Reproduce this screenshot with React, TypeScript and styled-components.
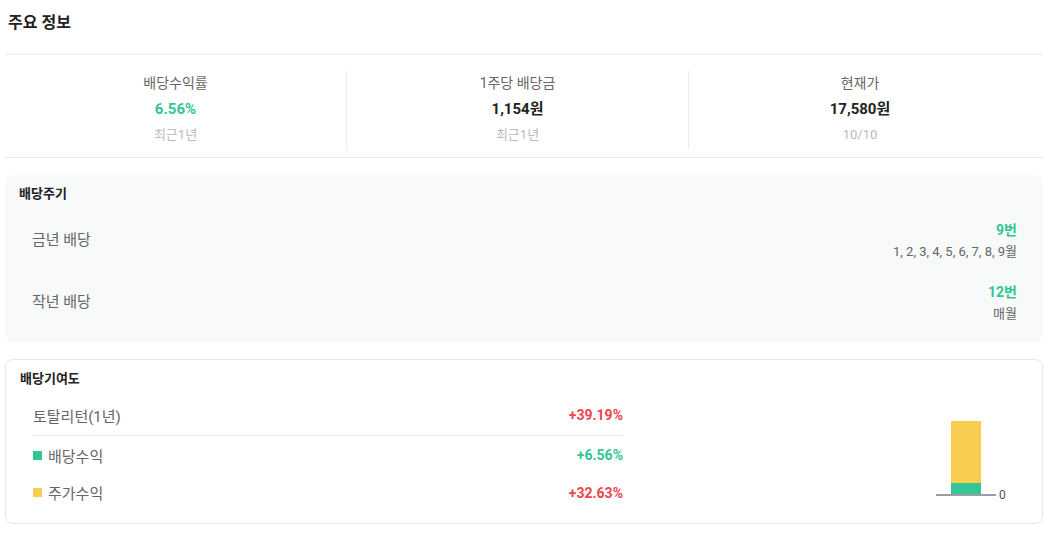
import { createGlobalStyle } from "styled-components";
import styled from "styled-components";

const GREEN = "#33c596";
const RED = "#f2434f";
const YELLOW = "#f8cd50";

const GlobalStyle = createGlobalStyle`
  body {
    margin: 0;
    background: #fff;
    font-family: Roboto, "Noto Sans CJK KR", sans-serif;
    color: #222;
  }
`;

const Page = styled.div`
  width: 1038px;
  padding: 0 21px 10px 5px;
`;

const PageTitle = styled.h2`
  margin: 0;
  height: 55px;
  line-height: 46px;
  padding-left: 3px;
  font-size: 16px;
  font-weight: 700;
  color: #222;
  border-bottom: 1px solid #ebebeb;
  box-sizing: border-box;
`;

const Stats = styled.div`
  display: grid;
  grid-template-columns: repeat(3, 342px);
  padding: 16px 0 8px;
  border-bottom: 1px solid #ebebeb;
  margin-bottom: 17px;
`;

const Stat = styled.div<{ $last?: boolean }>`
  display: flex;
  flex-direction: column;
  align-items: center;
  height: 78px;
  border-right: ${(p) => (p.$last ? "none" : "1px solid #ebebeb")};
`;

const StatLabel = styled.div`
  font-size: 14px;
  line-height: 24px;
  color: #666;
`;

const StatValue = styled.div<{ $green?: boolean }>`
  font-size: 15px;
  font-weight: 700;
  line-height: 28px;
  color: ${(p) => (p.$green ? GREEN : "#222")};
`;

const StatSub = styled.div`
  font-size: 13px;
  line-height: 24px;
  color: #bbb;
`;

const CycleBox = styled.section`
  background: #f8f9f9;
  border-radius: 8px;
  padding: 10px 14px 8px;
  margin-bottom: 17px;
`;

const BoxTitle = styled.h3`
  margin: 0 0 7px;
  font-size: 13px;
  font-weight: 700;
  line-height: 18px;
  color: #222;
`;

const CycleRow = styled.div`
  display: flex;
  justify-content: space-between;
  align-items: center;
  padding: 10px 12px 10px 13px;
`;

const RowLabel = styled.div`
  font-size: 15px;
  line-height: 20px;
  color: #666;
  margin-bottom: 3px;
`;

const CycleRight = styled.div`
  display: flex;
  flex-direction: column;
  align-items: flex-end;
`;

const CountText = styled.div`
  font-size: 14px;
  font-weight: 700;
  line-height: 21px;
  color: ${GREEN};
`;

const MonthText = styled.div`
  font-size: 13px;
  line-height: 21px;
  color: #666;
`;

const ContribCard = styled.section`
  border: 1px solid #e8e8e8;
  border-radius: 8px;
  padding: 10px 14px 12px;
`;

const ContribBody = styled.div`
  display: flex;
  align-items: flex-end;
  justify-content: space-between;
  margin-top: 7px;
`;

const ContribList = styled.div`
  width: 590px;
  margin-left: 13px;
`;

const ContribRow = styled.div<{ $h: number; $divider?: boolean }>`
  display: flex;
  justify-content: space-between;
  align-items: center;
  height: ${(p) => p.$h}px;
  border-bottom: ${(p) => (p.$divider ? "1px solid #e8e8e8" : "none")};
  box-sizing: border-box;
`;

const ContribLabel = styled.div`
  display: flex;
  align-items: center;
  gap: 6px;
  font-size: 15px;
  color: #666;
`;

const Swatch = styled.span<{ $color: string }>`
  display: inline-block;
  width: 9px;
  height: 9px;
  background: ${(p) => p.$color};
`;

const ContribValue = styled.div<{ $color: string }>`
  font-size: 14px;
  font-weight: 700;
  color: ${(p) => p.$color};
`;

const Chart = styled.svg`
  display: block;
  margin: 0 18px 6px 0;
`;

const stats = [
  { label: "배당수익률", value: "6.56%", sub: "최근1년", green: true },
  { label: "1주당 배당금", value: "1,154원", sub: "최근1년" },
  { label: "현재가", value: "17,580원", sub: "10/10" },
];

const cycles = [
  { label: "금년 배당", count: "9번", months: "1, 2, 3, 4, 5, 6, 7, 8, 9월" },
  { label: "작년 배당", count: "12번", months: "매월" },
];

export default function App() {
  return (
    <Page>
      <GlobalStyle />
      <PageTitle>주요 정보</PageTitle>

      <Stats>
        {stats.map((s, i) => (
          <Stat key={s.label} $last={i === stats.length - 1}>
            <StatLabel>{s.label}</StatLabel>
            <StatValue $green={s.green}>{s.value}</StatValue>
            <StatSub>{s.sub}</StatSub>
          </Stat>
        ))}
      </Stats>

      <CycleBox>
        <BoxTitle>배당주기</BoxTitle>
        {cycles.map((c) => (
          <CycleRow key={c.label}>
            <RowLabel>{c.label}</RowLabel>
            <CycleRight>
              <CountText>{c.count}</CountText>
              <MonthText>{c.months}</MonthText>
            </CycleRight>
          </CycleRow>
        ))}
      </CycleBox>

      <ContribCard>
        <BoxTitle>배당기여도</BoxTitle>
        <ContribBody>
          <ContribList>
            <ContribRow $h={41} $divider>
              <ContribLabel>토탈리턴(1년)</ContribLabel>
              <ContribValue $color={RED}>+39.19%</ContribValue>
            </ContribRow>
            <ContribRow $h={38}>
              <ContribLabel>
                <Swatch $color={GREEN} />
                배당수익
              </ContribLabel>
              <ContribValue $color={GREEN}>+6.56%</ContribValue>
            </ContribRow>
            <ContribRow $h={37}>
              <ContribLabel>
                <Swatch $color={YELLOW} />
                주가수익
              </ContribLabel>
              <ContribValue $color={RED}>+32.63%</ContribValue>
            </ContribRow>
          </ContribList>
          <Chart width="80" height="90" viewBox="0 0 80 90">
            <rect x="21" y="6" width="30" height="63" fill={YELLOW} />
            <rect x="21" y="68" width="30" height="13" fill={GREEN} />
            <line x1="6" y1="80" x2="66" y2="80" stroke="#9a9fa3" strokeWidth="2" />
            <text x="69" y="84" fontSize="12" fill="#555" fontFamily="Roboto, sans-serif">
              0
            </text>
          </Chart>
        </ContribBody>
      </ContribCard>
    </Page>
  );
}
